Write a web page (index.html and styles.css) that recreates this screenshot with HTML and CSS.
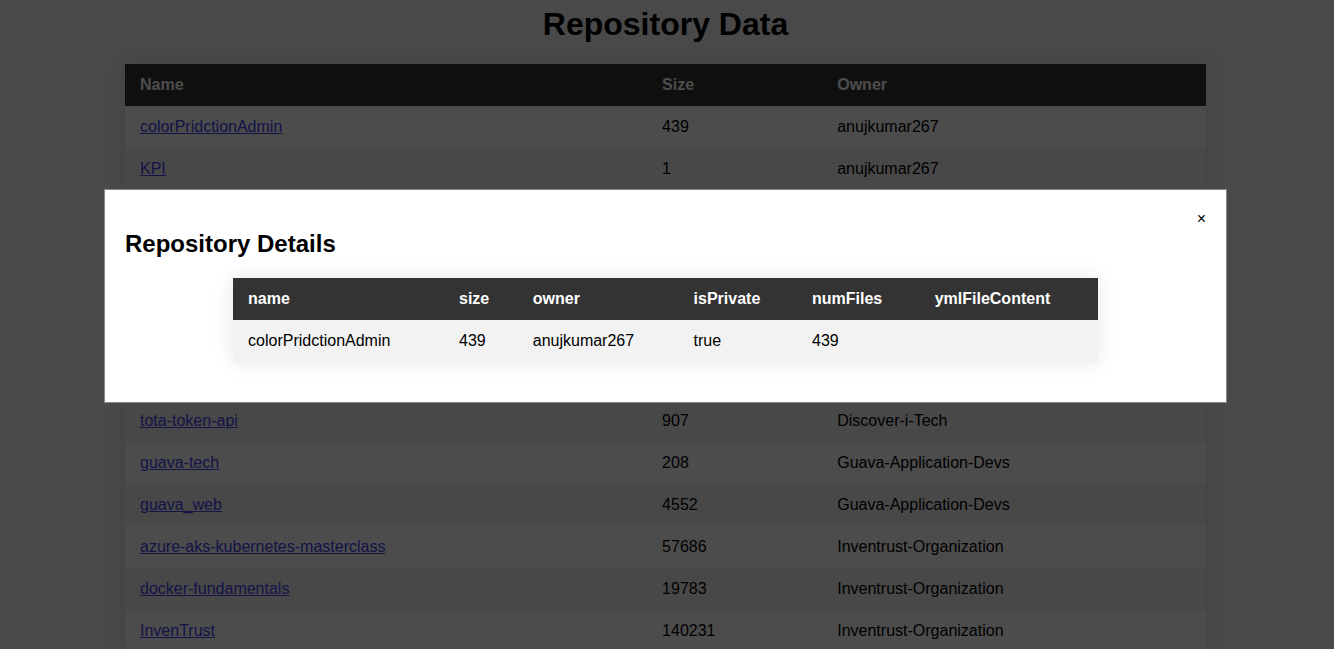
FILE: index.html
```html
<!DOCTYPE html>
<html lang="en">
<head>
<meta charset="utf-8">
<title>Repository Data</title>
<link rel="stylesheet" href="styles.css">
</head>
<body>
<main class="page">
  <h1 class="page-title">Repository Data</h1>
  <table class="table repo-table">
    <colgroup><col class="col-name"><col class="col-size"><col class="col-owner"></colgroup>
    <thead>
      <tr><th scope="col">Name</th><th scope="col">Size</th><th scope="col">Owner</th></tr>
    </thead>
    <tbody>
      <tr><td><a href="#details">colorPridctionAdmin</a></td><td>439</td><td>anujkumar267</td></tr>
      <tr><td><a href="#details">KPI</a></td><td>1</td><td>anujkumar267</td></tr>
      <tr><td></td><td></td><td></td></tr>
      <tr><td></td><td></td><td></td></tr>
      <tr><td></td><td></td><td></td></tr>
      <tr><td></td><td></td><td></td></tr>
      <tr><td></td><td></td><td></td></tr>
      <tr><td><a href="#details">tota-token-api</a></td><td>907</td><td>Discover-i-Tech</td></tr>
      <tr><td><a href="#details">guava-tech</a></td><td>208</td><td>Guava-Application-Devs</td></tr>
      <tr><td><a href="#details">guava_web</a></td><td>4552</td><td>Guava-Application-Devs</td></tr>
      <tr><td><a href="#details">azure-aks-kubernetes-masterclass</a></td><td>57686</td><td>Inventrust-Organization</td></tr>
      <tr><td><a href="#details">docker-fundamentals</a></td><td>19783</td><td>Inventrust-Organization</td></tr>
      <tr><td><a href="#details">InvenTrust</a></td><td>140231</td><td>Inventrust-Organization</td></tr>
    </tbody>
  </table>
</main>
<div class="overlay">
  <section class="modal" id="details" role="dialog" aria-modal="true" aria-labelledby="details-title">
    <header class="modal-header">
      <h2 class="modal-title" id="details-title">Repository Details</h2>
      <button class="close" type="button" aria-label="Close">×</button>
    </header>
    <table class="table details-table">
      <thead>
        <tr><th scope="col">name</th><th scope="col">size</th><th scope="col">owner</th><th scope="col">isPrivate</th><th scope="col">numFiles</th><th scope="col">ymlFileContent</th></tr>
      </thead>
      <tbody>
        <tr><td>colorPridctionAdmin</td><td>439</td><td>anujkumar267</td><td>true</td><td>439</td><td></td></tr>
      </tbody>
    </table>
  </section>
</div>
</body>
</html>
```

FILE: styles.css
```css
body {
  margin: 0;
  overflow: hidden;
  background: #f4f4f4;
  color: #000;
  font: 16px/18px "Liberation Sans", Arial, sans-serif;
}

.page {
  padding: 6px 128px 0 125px;
}

.page-title {
  margin: 0 0 22px;
  font-size: 32px;
  line-height: 36px;
  text-align: center;
}

.table {
  border-collapse: collapse;
  background: #fff;
  box-shadow: 0 0 20px rgba(0, 0, 0, 0.1);
}

.table th,
.table td {
  box-sizing: border-box;
  height: 42px;
  padding: 12px 15px;
  text-align: left;
}

.table th {
  background: #333;
  color: #fff;
}

.repo-table {
  width: 100%;
  table-layout: fixed;
}

.col-name {
  width: 48.3%;
}

.col-size {
  width: 16.2%;
}

.repo-table tbody tr:nth-child(even),
.details-table tbody tr {
  background: #f2f2f2;
}

.repo-table a {
  color: #44e;
}

.overlay {
  position: fixed;
  inset: 0;
  padding: 189px 107px 0 104px;
  background: rgba(0, 0, 0, 0.7);
}

.modal {
  padding: 20px;
  border: 1px solid #888;
  background: #fff;
}

.modal-header {
  display: flex;
  align-items: flex-start;
  justify-content: space-between;
}

.modal-title {
  margin: 20px 0;
  font-size: 24px;
  line-height: 28px;
}

.close {
  padding: 0;
  border: 0;
  background: none;
  color: #000;
  font: inherit;
  cursor: pointer;
}

.details-table {
  width: 80%;
  margin: 0 auto 20px;
}
```
